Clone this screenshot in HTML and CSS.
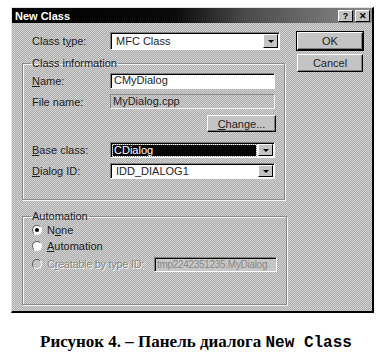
FILE: index.html
```html
<!DOCTYPE html>
<html>
<head>
  <title>New Class</title>
  <link rel="stylesheet" href="styles.css">
</head>
<body>

  <div class="dialog">
    <div class="titlebar">
      <span class="title">New Class</span>
      <div class="caption-buttons">
        <span class="cap-btn">?</span>
        <span class="cap-btn">&#x2715;</span>
      </div>
    </div>

    <div class="content">
      <div class="main">
        <div class="row row-type">
          <span class="label">Class t<u>y</u>pe:</span>
          <div class="combo wide">
            <span class="combo-text">MFC Class</span>
            <span class="drop"></span>
          </div>
        </div>

        <fieldset class="group group-info">
          <legend>Class information</legend>
          <div class="row row-name">
            <span class="label"><u>N</u>ame:</span>
            <div class="edit">CMyDialog</div>
          </div>
          <div class="row row-file">
            <span class="label">File name:</span>
            <div class="static">MyDialog.cpp</div>
          </div>
          <div class="row row-change">
            <button class="btn btn-change"><u>C</u>hange...</button>
          </div>
          <div class="row row-base">
            <span class="label"><u>B</u>ase class:</span>
            <div class="combo">
              <span class="combo-text selected">CDialog</span>
              <span class="drop"></span>
            </div>
          </div>
          <div class="row row-id">
            <span class="label"><u>D</u>ialog ID:</span>
            <div class="combo">
              <span class="combo-text">IDD_DIALOG1</span>
              <span class="drop"></span>
            </div>
          </div>
        </fieldset>

        <fieldset class="group group-auto">
          <legend>Automation</legend>
          <div class="radio-row first">
            <span class="radio checked"></span>
            <span>N<u>o</u>ne</span>
          </div>
          <div class="radio-row">
            <span class="radio"></span>
            <span><u>A</u>utomation</span>
          </div>
          <div class="radio-row disabled">
            <span class="radio"></span>
            <span class="dis-text">C<u>r</u>eatable by type ID:</span>
            <div class="edit edit-dis">tmp2242351235.MyDialog</div>
          </div>
        </fieldset>
      </div>

      <div class="side">
        <button class="btn btn-default">OK</button>
        <button class="btn">Cancel</button>
      </div>
    </div>
  </div>

  <p class="caption">Рисунок 4. – Панель диалога <span class="mono">New Class</span></p>

</body>
</html>
```

FILE: styles.css
```css
body {
  margin: 0;
  background: white;
  font-family: 'Liberation Sans', Arial, sans-serif;
  font-size: 11px;
  color: #1e1e1e;
}

.dialog {
  margin: 7px 0 0 11px;
  width: 360px;
  height: 303px;
  border-top: 1px solid #e4e4e4;
  border-left: 1px solid #e4e4e4;
  border-right: 2px solid #000;
  border-bottom: 2px solid #000;
  background: #bfbfbf repeating-conic-gradient(#adadad 0 25%, #d2d2d2 0 50%) 0 0 / 2px 2px;
}

.titlebar {
  height: 15px;
  display: flex;
  align-items: center;
  justify-content: space-between;
  background: linear-gradient(to right, #000 0%, #0a0a0a 45%, #4a4a4a 65%, #8c8c8c 100%);
}

.title {
  color: white;
  font-weight: bold;
  font-size: 11px;
  padding-left: 3px;
}

.caption-buttons {
  display: flex;
  gap: 2px;
  padding-right: 2px;
}

.cap-btn {
  width: 13px;
  height: 10px;
  line-height: 10px;
  font-size: 9px;
  font-weight: bold;
  text-align: center;
  color: #000;
  background: #c4c4c4;
  border-top: 1px solid #fff;
  border-left: 1px solid #fff;
  border-right: 1px solid #000;
  border-bottom: 1px solid #000;
}

.content {
  display: flex;
  gap: 12px;
  padding: 9px 0 0 10px;
}

.main {
  width: 263px;
  display: flex;
  flex-direction: column;
}

.row {
  display: flex;
  align-items: center;
}

.label {
  width: 78px;
  flex-shrink: 0;
}

.row-type {
  height: 18px;
  padding-left: 10px;
}

.combo {
  position: relative;
  width: 165px;
  height: 16px;
  box-sizing: border-box;
  display: flex;
  align-items: center;
  background: white;
  border-top: 1px solid #808080;
  border-left: 1px solid #808080;
  border-right: 1px solid #fff;
  border-bottom: 1px solid #fff;
  box-shadow: inset 1px 1px 0 #000;
}

.combo.wide {
  width: 170px;
  height: 18px;
}

.combo-text {
  flex: 1;
  padding-left: 3px;
  margin: 2px 18px 1px 2px;
  line-height: 11px;
}

.combo-text.selected {
  background: #050505;
  color: white;
  outline: 1px dotted #888;
  margin-left: 2px;
  padding-left: 1px;
}

.drop {
  position: absolute;
  right: 1px;
  top: 1px;
  bottom: 1px;
  width: 15px;
  box-sizing: border-box;
  background: #c4c4c4;
  border-top: 1px solid #fff;
  border-left: 1px solid #fff;
  border-right: 1px solid #000;
  border-bottom: 1px solid #000;
  display: flex;
  align-items: center;
  justify-content: center;
}

.drop::after {
  content: '';
  border-left: 3px solid transparent;
  border-right: 3px solid transparent;
  border-top: 3px solid #000;
}

.group {
  margin: 0;
  padding: 0 9px;
  box-sizing: border-box;
  width: 263px;
  border: 1px solid #8a8a8a;
  box-shadow: 1px 1px 0 #f4f4f4, inset 1px 1px 0 #f4f4f4;
}

.group legend {
  padding: 0 1px;
  margin-left: -1px;
  line-height: 14px;
}

.group-info {
  margin-top: 6px;
  padding-bottom: 20px;
}

.row-name {
  margin-top: 3px;
  height: 16px;
}

.edit {
  width: 165px;
  height: 16px;
  box-sizing: border-box;
  padding-left: 3px;
  line-height: 13px;
  background: white;
  border-top: 1px solid #808080;
  border-left: 1px solid #808080;
  border-right: 1px solid #fff;
  border-bottom: 1px solid #fff;
  box-shadow: inset 1px 1px 0 #000;
}

.row-file {
  margin-top: 5px;
  height: 15px;
}

.static {
  width: 165px;
  height: 15px;
  box-sizing: border-box;
  padding-left: 2px;
  line-height: 13px;
  border-top: 1px solid #8a8a8a;
  border-left: 1px solid #8a8a8a;
  border-right: 1px solid #f4f4f4;
  border-bottom: 1px solid #f4f4f4;
}

.row-change {
  margin-top: 6px;
  justify-content: flex-end;
  padding-right: 0;
}

.row-base {
  margin-top: 10px;
  height: 16px;
}

.row-id {
  margin-top: 5px;
  height: 16px;
}

.btn {
  font-family: 'Liberation Sans', Arial, sans-serif;
  font-size: 11px;
  color: #1e1e1e;
  padding: 0;
  background: #c4c4c4;
  border-top: 1px solid #fff;
  border-left: 1px solid #fff;
  border-right: 1px solid #000;
  border-bottom: 1px solid #000;
  box-shadow: inset -1px -1px 0 #808080;
}

.btn-change {
  width: 69px;
  height: 17px;
  margin-right: -1px;
}

.group-auto {
  margin-top: 9px;
  padding-bottom: 32px;
}

.radio-row {
  display: flex;
  align-items: center;
  gap: 5px;
  height: 14px;
  margin-top: 2px;
}

.radio-row.first {
  margin-top: 0;
}

.radio-row.disabled {
  height: 16px;
  margin-top: 3px;
}

.radio {
  width: 10px;
  height: 10px;
  flex-shrink: 0;
  box-sizing: border-box;
  border-radius: 50%;
  background: white;
  border: 1px solid;
  border-color: #606060 #fff #fff #606060;
  display: flex;
  align-items: center;
  justify-content: center;
}

.radio.checked::after {
  content: '';
  width: 4px;
  height: 4px;
  border-radius: 50%;
  background: #000;
}

.disabled .radio {
  background: #c4c4c4;
}

.dis-text {
  color: #8a8a8a;
  text-shadow: 1px 1px 0 #f4f4f4;
  white-space: nowrap;
  letter-spacing: -0.3px;
  width: 102px;
  flex-shrink: 0;
}

.edit-dis {
  width: 123px;
  height: 15px;
  flex-shrink: 0;
  background: #c6c6c6;
  color: #8a8a8a;
  padding-left: 2px;
  font-size: 10px;
  letter-spacing: -0.3px;
  white-space: nowrap;
}

.side {
  display: flex;
  flex-direction: column;
  gap: 4px;
}

.side .btn {
  width: 66px;
  height: 18px;
}

.btn-default {
  outline: 1px solid #000;
  outline-offset: 0;
}

.caption {
  margin: 19px 0 0 40px;
  font-family: 'Liberation Serif', 'Times New Roman', serif;
  font-weight: bold;
  font-size: 17px;
  color: #000;
  white-space: nowrap;
}

.mono {
  font-family: 'Liberation Mono', 'Courier New', monospace;
  font-size: 16px;
}
```
